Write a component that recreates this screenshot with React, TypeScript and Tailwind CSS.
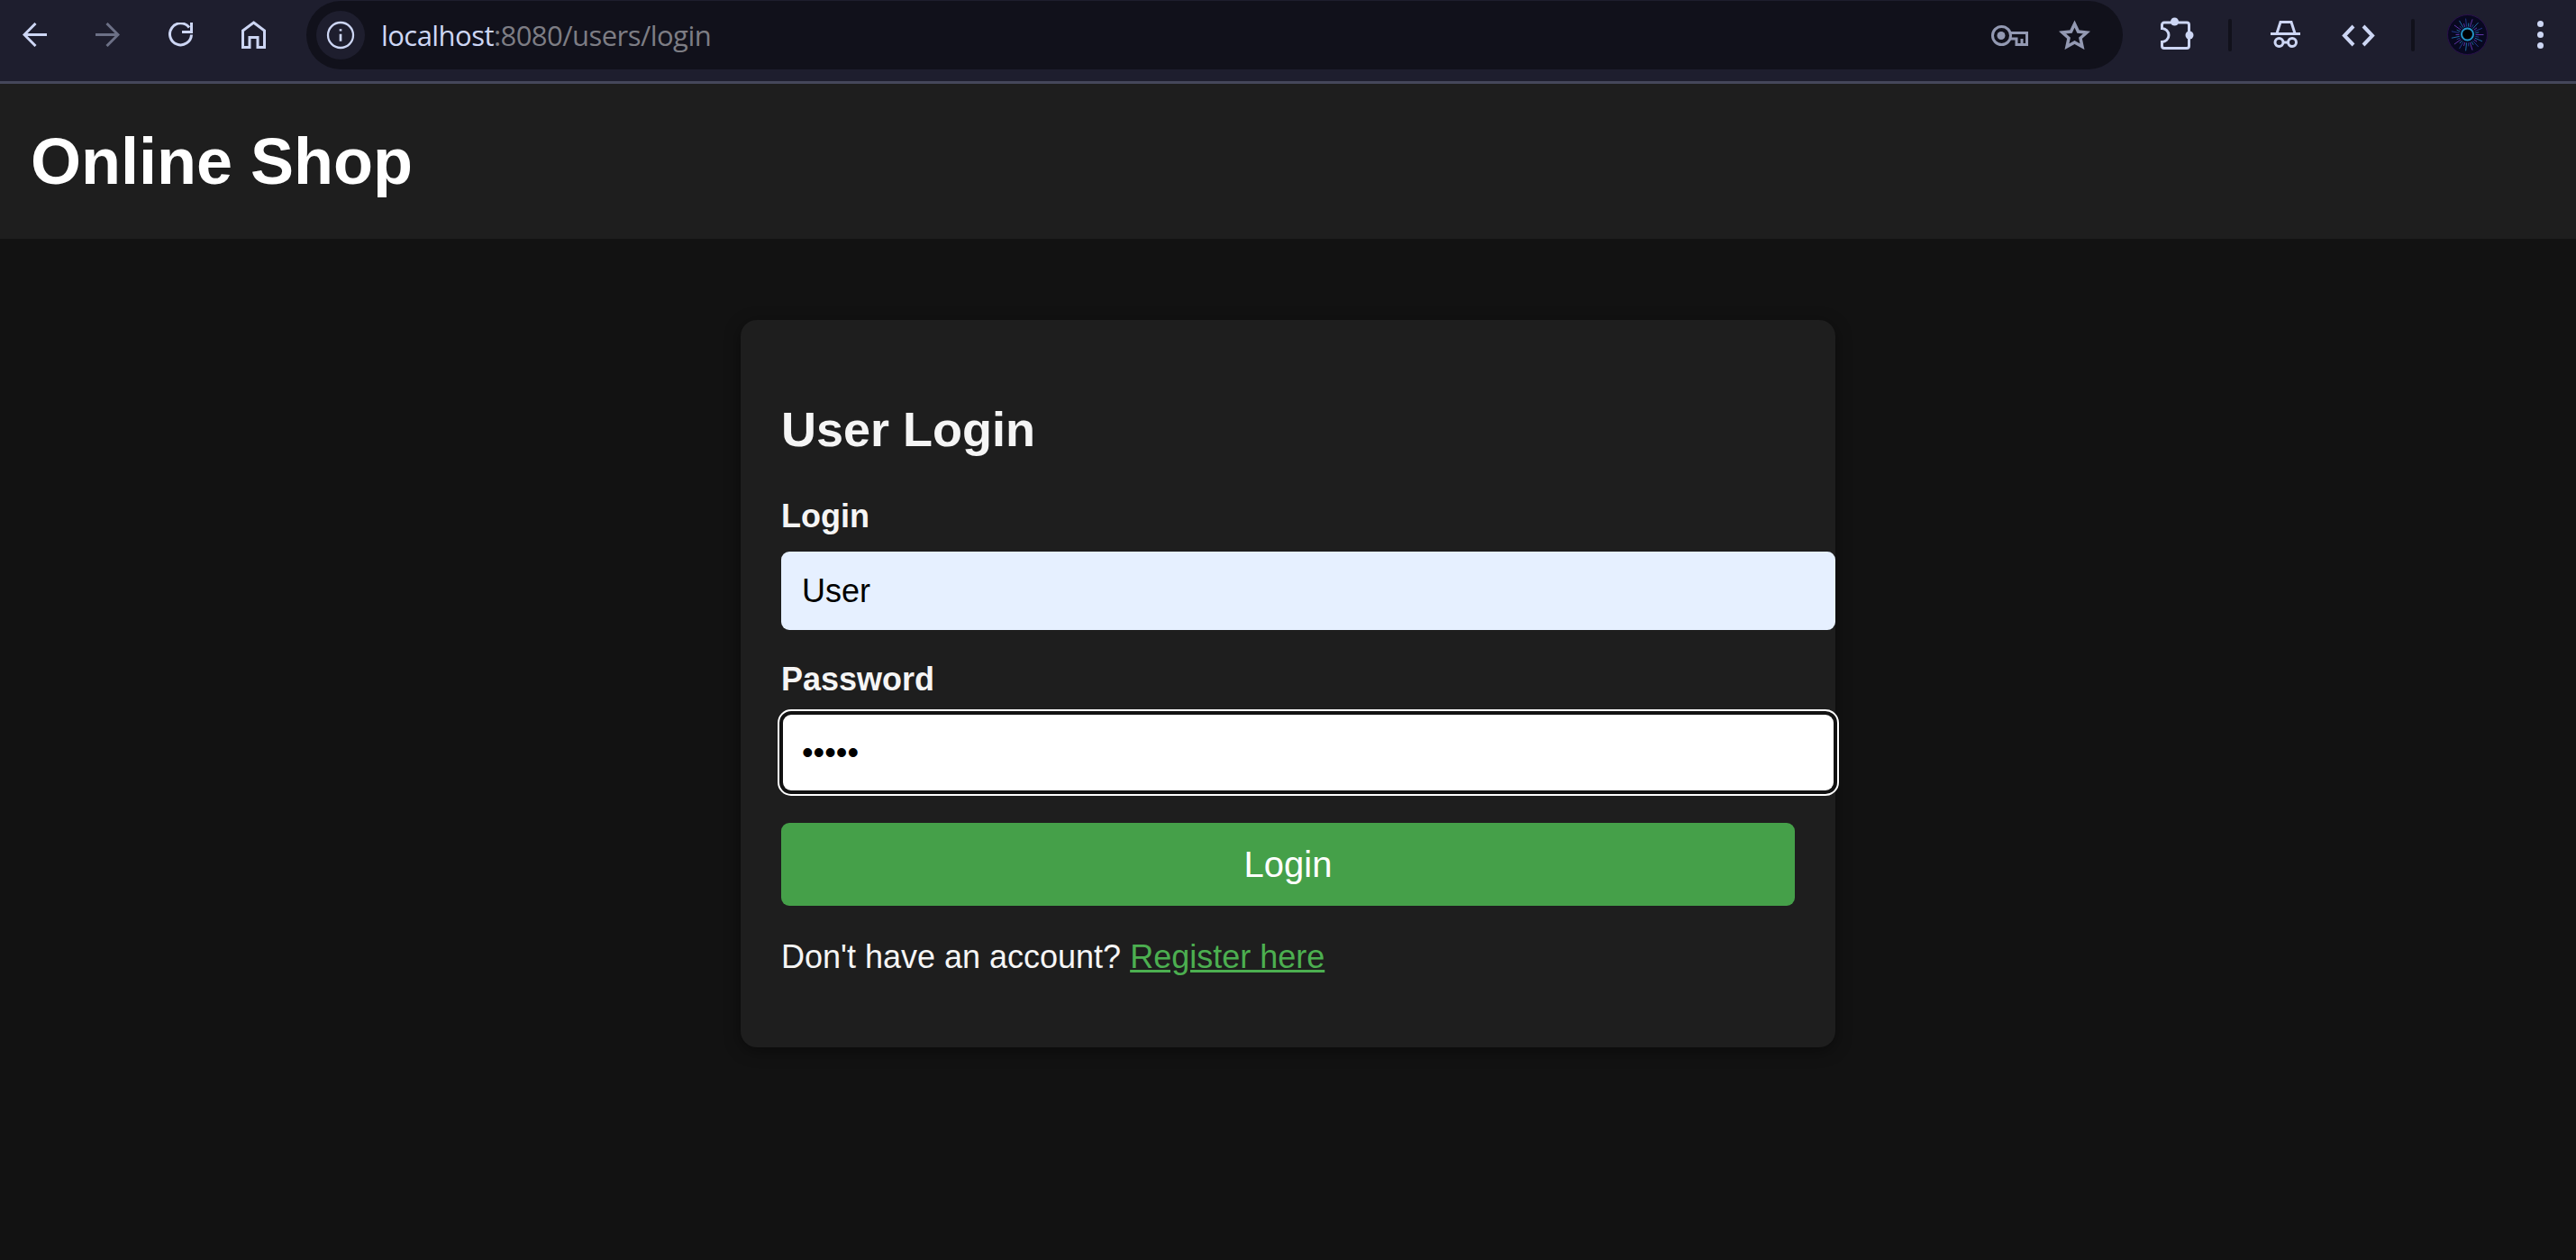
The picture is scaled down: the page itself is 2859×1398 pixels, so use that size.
import React from "react";

const spokes = Array.from({ length: 30 }, (_, i) => (i * Math.PI * 2) / 30);

export default function App() {
  return (
    <div className="min-h-[1398px] bg-[#121212] font-['Liberation_Sans',Arial,sans-serif] text-white flex flex-col">
      <div className="h-[93px] shrink-0 bg-[#1e1e2e] border-b-[3px] border-[#45475a] flex items-start pl-[25px] text-[#cdd6f4]">
        <div className="flex items-start gap-[54px] mt-[25px]">
          <svg width="27" height="27" viewBox="0 0 27 27" fill="none" stroke="currentColor" strokeWidth="3" className="shrink-0"><path d="M27 13.500H3M14.500 1L2 13.500 14.500 26" /></svg>
          <svg width="27" height="27" viewBox="0 0 27 27" fill="none" stroke="#6c7086" strokeWidth="3" className="shrink-0"><path d="M0 13.500H24M12.500 1L25 13.500 12.500 26" /></svg>
          <svg width="27" height="27" viewBox="0 0 27 27" fill="none" stroke="currentColor" strokeWidth="3" className="shrink-0"><path d="M23 5.500A12 12 0 1 0 25.500 13.500" /><path d="M25.500 0V10.500H15" /></svg>
          <svg width="27" height="31" viewBox="0 0 27 31" fill="none" stroke="currentColor" strokeWidth="3" className="shrink-0 -mt-[2px]"><path d="M13.500 2L25.500 11V29.500H18V18.500H9V29.500H1.500V11Z" /></svg>
        </div>
        <div className="ml-[45px] mt-px w-[2016px] h-[76px] shrink-0 bg-[#11111b] rounded-full flex items-center pl-[11px] pr-[36px]">
          <div className="w-[54px] h-[54px] rounded-full bg-[#1e1e2e] flex items-center justify-center">
            <svg width="32" height="32" viewBox="0 0 24 24" fill="none" stroke="currentColor" strokeWidth="2"><circle cx="12" cy="12" r="10.500" strokeWidth="1.700" /><path d="M12 11v6M12 7v1.600" /></svg>
          </div>
          <div className="ml-[18px] text-[31px] font-['Open_Sans',sans-serif] tracking-[-0.55px] flex-1">
            <span className="text-[#cdd6f4]">localhost</span><span className="text-[#7d7d84]">:8080/users/login</span>
          </div>
          <div className="flex items-center gap-[34px] text-[#9399b2]">
            <svg width="41" height="23" viewBox="0 0 41 23" fill="none" stroke="currentColor" strokeWidth="3" className="shrink-0 mt-[1px]">
              <circle cx="11.500" cy="11.500" r="10" /><circle cx="11" cy="11.500" r="4.500" fill="currentColor" stroke="none" />
              <path d="M21 8.500H39.500V21.500H28V15H21M34 15V21" />
            </svg>
            <svg width="35" height="33" viewBox="0 0 35 33" fill="none" stroke="currentColor" strokeWidth="3.500" className="shrink-0 -mt-[1px]">
              <path d="M17.500 4.500L21.500 13 31 14 24 20.300 26 29.700 17.500 25 9 29.700 11 20.300 4 14 13.500 13Z" />
            </svg>
          </div>
        </div>
        <svg width="37" height="37" viewBox="0 0 37 37" fill="none" stroke="currentColor" strokeWidth="3" className="shrink-0 ml-[42px] mt-[19px]">
          <path d="M4 6H29A2.500 2.500 0 0 1 31.500 8.500V32A2.500 2.500 0 0 1 29 34.500H4A2.500 2.500 0 0 1 1.500 32V27.500A7.500 7.500 0 0 0 1.500 12.500V8.500A2.500 2.500 0 0 1 4 6Z" />
          <circle cx="15.500" cy="5" r="4.500" fill="currentColor" stroke="none" /><circle cx="32" cy="20" r="4.500" fill="currentColor" stroke="none" />
        </svg>
        <div className="w-[4px] h-[36px] rounded shrink-0 bg-[#11111b] ml-[38px] mt-[21px]" />
        <svg width="33" height="30" viewBox="0 0 33 30" fill="none" stroke="currentColor" strokeWidth="3" className="shrink-0 ml-[43px] mt-[23px]">
          <path d="M0 14.500H33M7 14L11 1.500H23L27 14" />
          <circle cx="9.500" cy="24" r="4.500" /><circle cx="24" cy="24" r="4.500" /><path d="M14 24H19.500" />
        </svg>
        <svg width="37" height="25" viewBox="0 0 37 25" fill="none" stroke="currentColor" strokeWidth="4" className="shrink-0 ml-[46px] mt-[27px]">
          <path d="M13 2L3 12.500 13 23M24 2L34 12.500 24 23" />
        </svg>
        <div className="w-[4px] h-[36px] rounded shrink-0 bg-[#11111b] ml-[40px] mt-[21px]" />
        <svg width="45" height="45" viewBox="0 0 45 45" className="shrink-0 ml-[36px] mt-[16px]">
          <circle cx="22.500" cy="22.500" r="22" fill="#080820" stroke="#2a0f4d" strokeWidth="1" />
          {spokes.map((a, i) => (
            <line
              key={i}
              x1={22.5 + 9 * Math.cos(a)}
              y1={22.5 + 9 * Math.sin(a)}
              x2={22.5 + (i % 2 ? 13 : 18) * Math.cos(a)}
              y2={22.5 + (i % 2 ? 13 : 18) * Math.sin(a)}
              stroke={i % 3 === 0 ? "#5f35a8" : i % 3 === 1 ? "#1f3a8a" : "#1f6aa0"}
              strokeWidth="1"
            />
          ))}
          <circle cx="22.500" cy="22" r="6.500" fill="#000" stroke="#2496c8" strokeWidth="2" />
        </svg>
        <div className="ml-[55px] mt-[23px] flex flex-col gap-[5px] shrink-0">
          <div className="w-[7px] h-[7px] rounded-full bg-[#cdd6f4]" />
          <div className="w-[7px] h-[7px] rounded-full bg-[#cdd6f4]" />
          <div className="w-[7px] h-[7px] rounded-full bg-[#cdd6f4]" />
        </div>
      </div>
      <header className="h-[172px] shrink-0 bg-[#1e1e1e] pl-[34px] flex items-center">
        <h1 className="text-[72px] leading-none font-bold">Online Shop</h1>
      </header>
      <main className="flex justify-center pt-[90px]">
        <div className="w-[1215px] h-[807px] bg-[#1e1e1e] rounded-[18px] shadow-[0_4px_18px_rgba(0,0,0,0.4)] pl-[45px] pt-[90px]">
          <h2 className="text-[54px] leading-none font-bold text-[#f5f5f5] mt-[4px]">User Login</h2>
          <label className="block text-[36px] leading-none font-bold text-[#f5f5f5] mt-[52px]">Login</label>
          <input readOnly value="User" className="block w-[1170px] h-[87px] mt-[21px] bg-[#e6f0ff] rounded-[9px] pl-[23px] text-[36px] text-black outline-none" />
          <label className="block text-[36px] leading-none font-bold text-[#f5f5f5] mt-[37px]">Password</label>
          <input readOnly type="password" value="admin" className="block w-[1166px] h-[84px] mt-[21px] ml-[2px] bg-white rounded-[9px] pl-[21px] text-[36px] text-black outline-2 outline-offset-[4px] outline-white ring-[4px] ring-[#121212]" />
          <button className="block w-[1125px] h-[92px] mt-[36px] bg-[#45a049] rounded-[9px] text-[40px] text-white text-center">Login</button>
          <p className="text-[36px] leading-none text-[#f5f5f5] mt-[39px]">Don't have an account? <a className="text-[#4caf50] underline">Register here</a></p>
        </div>
      </main>
    </div>
  );
}
